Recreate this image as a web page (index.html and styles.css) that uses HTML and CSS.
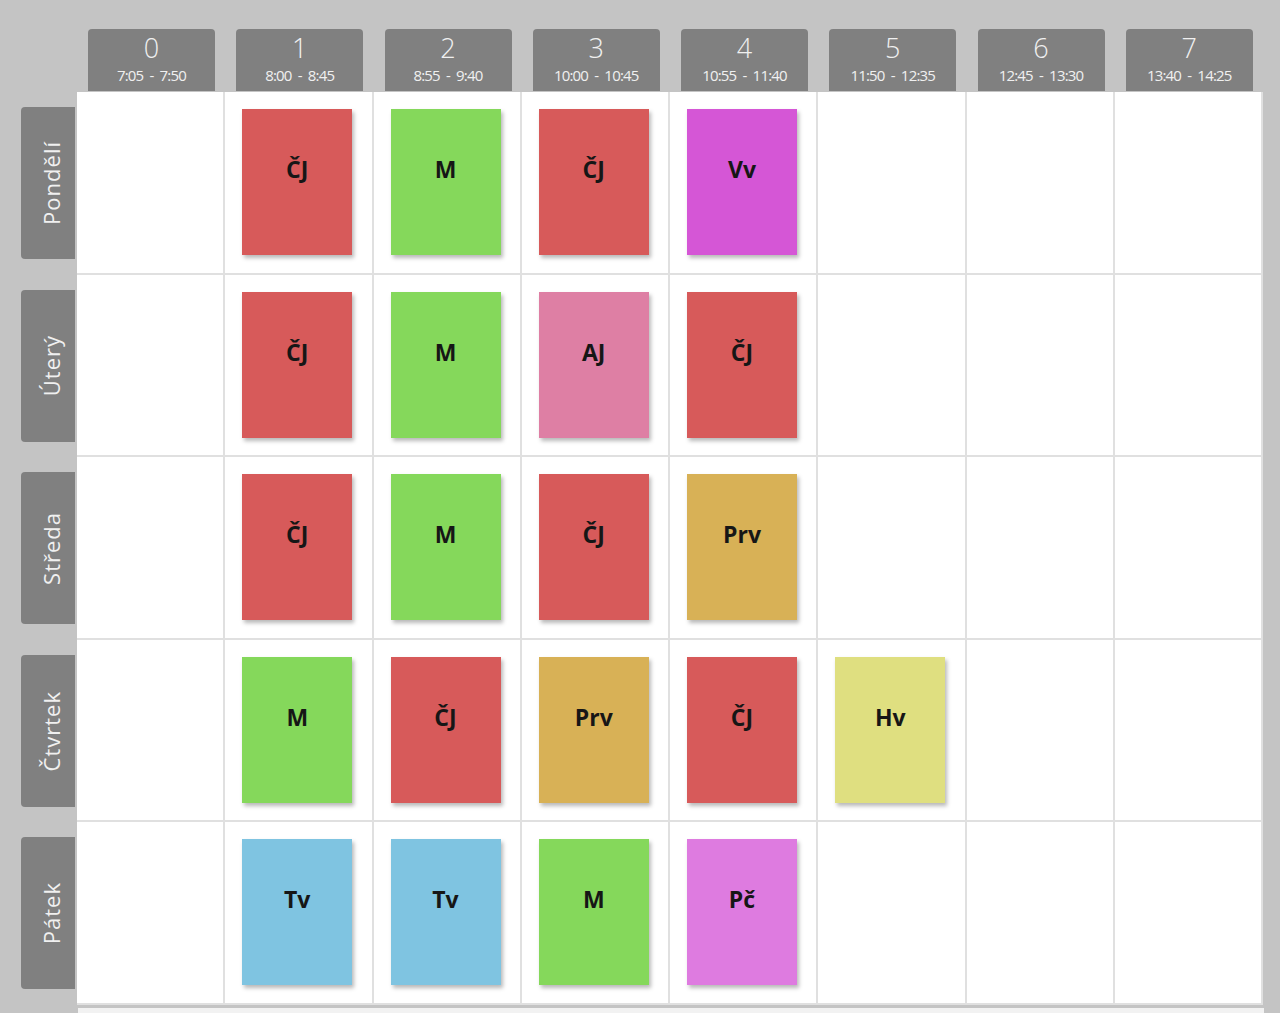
FILE: index.html
```html
<!DOCTYPE html>
<html lang="cs">
<head>
<meta charset="utf-8">
<title>Rozvrh</title>
<link rel="stylesheet" href="styles.css">
</head>
<body>
<div class="timetable">
  <div class="corner"></div>
  <div class="head"><div class="htab"><span class="num">0</span><span class="time">7:05 - 7:50</span></div></div>
  <div class="head"><div class="htab"><span class="num">1</span><span class="time">8:00 - 8:45</span></div></div>
  <div class="head"><div class="htab"><span class="num">2</span><span class="time">8:55 - 9:40</span></div></div>
  <div class="head"><div class="htab"><span class="num">3</span><span class="time">10:00 - 10:45</span></div></div>
  <div class="head"><div class="htab"><span class="num">4</span><span class="time">10:55 - 11:40</span></div></div>
  <div class="head"><div class="htab"><span class="num">5</span><span class="time">11:50 - 12:35</span></div></div>
  <div class="head"><div class="htab"><span class="num">6</span><span class="time">12:45 - 13:30</span></div></div>
  <div class="head"><div class="htab"><span class="num">7</span><span class="time">13:40 - 14:25</span></div></div>

  <div class="day"><div class="dtab"><span>Pondělí</span></div></div>
  <div class="cell"></div>
  <div class="cell"><div class="card red">ČJ</div></div>
  <div class="cell"><div class="card green">M</div></div>
  <div class="cell"><div class="card red">ČJ</div></div>
  <div class="cell"><div class="card magenta">Vv</div></div>
  <div class="cell"></div>
  <div class="cell"></div>
  <div class="cell"></div>

  <div class="day"><div class="dtab"><span>Úterý</span></div></div>
  <div class="cell"></div>
  <div class="cell"><div class="card red">ČJ</div></div>
  <div class="cell"><div class="card green">M</div></div>
  <div class="cell"><div class="card pink">AJ</div></div>
  <div class="cell"><div class="card red">ČJ</div></div>
  <div class="cell"></div>
  <div class="cell"></div>
  <div class="cell"></div>

  <div class="day"><div class="dtab"><span>Středa</span></div></div>
  <div class="cell"></div>
  <div class="cell"><div class="card red">ČJ</div></div>
  <div class="cell"><div class="card green">M</div></div>
  <div class="cell"><div class="card red">ČJ</div></div>
  <div class="cell"><div class="card gold">Prv</div></div>
  <div class="cell"></div>
  <div class="cell"></div>
  <div class="cell"></div>

  <div class="day"><div class="dtab"><span>Čtvrtek</span></div></div>
  <div class="cell"></div>
  <div class="cell"><div class="card green">M</div></div>
  <div class="cell"><div class="card red">ČJ</div></div>
  <div class="cell"><div class="card gold">Prv</div></div>
  <div class="cell"><div class="card red">ČJ</div></div>
  <div class="cell"><div class="card yellow">Hv</div></div>
  <div class="cell"></div>
  <div class="cell"></div>

  <div class="day"><div class="dtab"><span>Pátek</span></div></div>
  <div class="cell"></div>
  <div class="cell"><div class="card blue">Tv</div></div>
  <div class="cell"><div class="card blue">Tv</div></div>
  <div class="cell"><div class="card green">M</div></div>
  <div class="cell"><div class="card violet">Pč</div></div>
  <div class="cell"></div>
  <div class="cell"></div>
  <div class="cell"></div>
</div>
<div class="footer"></div>
</body>
</html>
```

FILE: styles.css
```css
html, body {
  margin: 0;
  padding: 0;
  background: #c4c4c4;
  font-family: "Open Sans", "Noto Sans", sans-serif;
  overflow: hidden;
}

.timetable {
  display: grid;
  width: 1265px;
  grid-template-columns: 77px repeat(8, 148.25px);
  grid-template-rows: 92px repeat(5, 182.6px);
}

.head {
  padding: 29px 0 0 11px;
  box-sizing: border-box;
}

.htab {
  width: 127px;
  height: 62px;
  background: #808080;
  border-radius: 4px 4px 0 0;
  color: #f0f0f0;
  display: flex;
  flex-direction: column;
  align-items: center;
}

.num {
  font-size: 27px;
  line-height: 30px;
  margin-top: 4px;
  font-weight: 300;
}

.time {
  font-size: 15px;
  line-height: 18px;
  margin-top: 3px;
  letter-spacing: -0.8px;
  word-spacing: 3px;
}

.day {
  padding: 15px 2px 0 21px;
  box-sizing: border-box;
}

.dtab {
  width: 54px;
  height: 152px;
  background: #808080;
  border-radius: 4px 0 0 4px;
  display: flex;
  align-items: center;
  justify-content: center;
  color: #f0f0f0;
}

.dtab span {
  writing-mode: vertical-rl;
  transform: rotate(180deg);
  font-size: 22px;
  letter-spacing: 1px;
  margin-left: 5px;
}

.cell {
  background: #fff;
  border-right: 2px solid #e0e0e0;
  border-bottom: 2px solid #e0e0e0;
  box-sizing: border-box;
  padding: 17px 0 0 17px;
}

.card {
  width: 110px;
  height: 146px;
  box-sizing: border-box;
  padding-top: 46px;
  text-align: center;
  font-weight: 700;
  font-size: 23px;
  line-height: 28px;
  color: #161616;
  box-shadow: 2px 3px 4px rgba(0, 0, 0, 0.28);
}

.red { background: #d75a5a; }
.green { background: #85d85b; }
.magenta { background: #d556d6; }
.pink { background: #de7fa4; }
.gold { background: #d8b156; }
.yellow { background: #dfdf80; }
.blue { background: #7fc4e1; }
.violet { background: #de7be0; }

.footer {
  margin: 3px 0 0 78px;
  width: 1186px;
  height: 20px;
  background: #f2f2f2;
}
```
